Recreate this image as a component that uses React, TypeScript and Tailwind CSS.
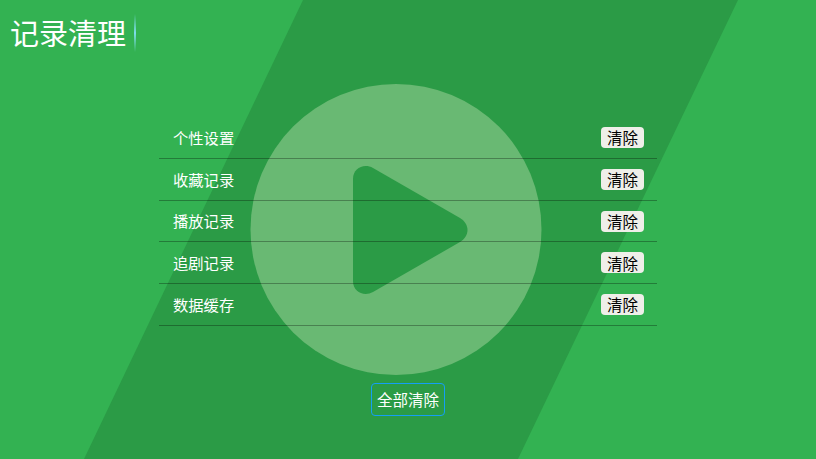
const rows = ["个性设置", "收藏记录", "播放记录", "追剧记录", "数据缓存"];

const font = { fontFamily: '"Noto Sans CJK SC", "Noto Sans", sans-serif' };

function BackgroundLogo() {
  return (
    <svg className="absolute inset-0" width="816" height="459" viewBox="0 0 816 459">
      <polygon points="303,0 738,0 518,459 84,459" fill="#2b9b46" />
      <circle cx="396" cy="229.5" r="145.5" fill="#69b973" />
      <path
        d="M353 179 C353 168 364 163 373 168 L460 218 C470 224 470 236 460 242 L373 292 C364 297 353 292 353 281 Z"
        fill="#2b9b46"
      />
    </svg>
  );
}

export default function App() {
  return (
    <div className="relative h-[459px] w-[816px] overflow-hidden bg-[#33b252] text-white" style={font}>
      <BackgroundLogo />
      <div className="relative flex h-[117px] flex-col">
        <div className="flex h-[65px] items-center pl-[10px]">
          <h1 className="w-[116px] text-[29px] leading-none font-normal">记录清理</h1>
          <span className="ml-[8px] h-[38px] w-[2px] bg-gradient-to-b from-transparent via-[#7fdcea] to-transparent" />
        </div>
      </div>
      <ul className="relative mx-[159px] h-[209px] w-[498px] pt-[0.4px]">
        {rows.map((label) => (
          <li key={label} className="flex h-[41.7px] items-center justify-between border-b border-black/30 pr-[13px] pl-[14px]">
            <span className="text-[15.3px] leading-none">{label}</span>
            <button className="flex h-[21px] w-[43px] items-center justify-center rounded-[4px] bg-[#efefe9] pt-px text-[15.5px] leading-none text-black">
              清除
            </button>
          </li>
        ))}
      </ul>
      <div className="relative mt-[57px] flex justify-center">
        <button className="flex h-[33px] w-[74px] items-center justify-center rounded-[4px] border border-[#149ff5] text-[15.5px] leading-none text-white">
          全部清除
        </button>
      </div>
    </div>
  );
}
